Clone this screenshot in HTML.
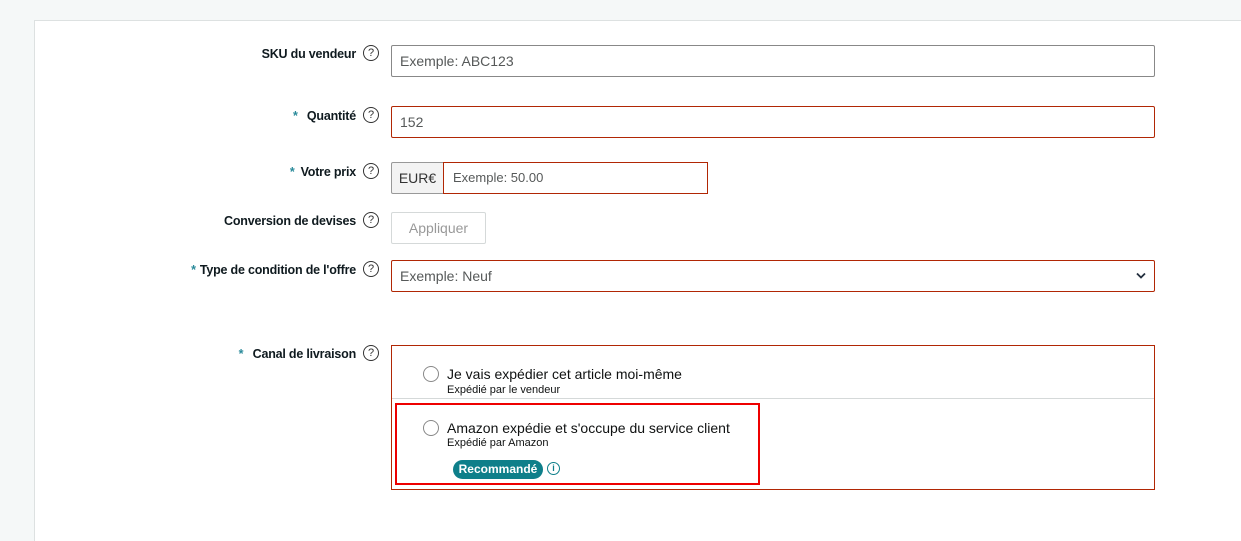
<!DOCTYPE html><html><head><style>
body{margin:0;width:1241px;height:530px;background:#f5f8f8;font-family:"Liberation Sans",sans-serif;position:relative;overflow:hidden}
.panel{position:absolute;left:34px;top:20px;width:1220px;height:520px;background:#fff;border-top:1px solid #dde1e1;border-left:1px solid #dde1e1}
.a{position:absolute}
.lbl{position:absolute;right:885px;font-size:12.5px;font-weight:bold;color:#0f1a1f;white-space:nowrap;letter-spacing:-0.2px}
.st{color:#2a8a9a;margin-right:6px}
.q{position:absolute;left:363px;width:14px;height:14px;border:1.3px solid #333;border-radius:50%;font-size:11px;text-align:center;line-height:14px;color:#333}
.in{position:absolute;left:391px;height:30px;border:1px solid #b12704;border-radius:2px;font-size:14px;color:#565959;line-height:30px;padding-left:8px;width:754px}
</style></head><body>
<div class="panel"></div>
<div class="lbl" style="top:47px">SKU du vendeur</div><div class="q" style="top:45px">?</div>
<div class="in" style="top:45px;border-color:#888">Exemple: ABC123</div>
<div class="lbl" style="top:109px"><span class="st">*</span> Quantité</div><div class="q" style="top:107px">?</div>
<div class="in" style="top:106px">152</div>
<div class="lbl" style="top:165px"><span class="st">*</span>Votre prix</div><div class="q" style="top:163px">?</div>
<div class="a" style="left:391px;top:162px;width:51px;height:30px;border:1px solid #999;border-radius:2px 0 0 2px;background:#f3f3f3;font-size:14px;line-height:30px;text-align:center;color:#333">EUR€</div>
<div class="a" style="left:443px;top:162px;width:254px;height:30px;border:1px solid #b12704;font-size:13px;line-height:30px;padding-left:9px;color:#565959">Exemple: 50.00</div>
<div class="lbl" style="top:214px">Conversion de devises</div><div class="q" style="top:212px">?</div>
<div class="a" style="left:391px;top:212px;width:93px;height:30px;border:1px solid #d5d9d9;border-radius:2px;font-size:14px;line-height:30px;text-align:center;color:#999">Appliquer</div>
<div class="lbl" style="top:263px"><span class="st" style="margin-right:4px">*</span>Type de condition de l'offre</div><div class="q" style="top:261px">?</div>
<div class="in" style="top:260px">Exemple: Neuf</div>
<svg class="a" style="left:1136px;top:272px" width="10" height="8"><path d="M1 1.5l4 4 4-4" stroke="#232f3e" stroke-width="1.8" fill="none"/></svg>
<div class="lbl" style="top:347px"><span class="st">*</span> Canal de livraison</div><div class="q" style="top:345px">?</div>
<div class="a" style="left:391px;top:345px;width:762px;height:143px;border:1px solid #b12704"></div>
<div class="a" style="left:392px;top:398px;width:762px;height:1px;background:#d5d9d9"></div>
<div class="a" style="left:423px;top:366px;width:14px;height:14px;border:1px solid #888;border-radius:50%"></div>
<div class="a" style="left:447px;top:366px;font-size:14px;color:#0f1111">Je vais expédier cet article moi-même</div>
<div class="a" style="left:447px;top:384px;font-size:11px;color:#0f1111">Expédié par le vendeur</div>
<div class="a" style="left:395px;top:403px;width:361px;height:78px;border:2px solid #e00"></div>
<div class="a" style="left:423px;top:420px;width:14px;height:14px;border:1px solid #888;border-radius:50%"></div>
<div class="a" style="left:447px;top:420px;font-size:14px;color:#0f1111">Amazon expédie et s'occupe du service client</div>
<div class="a" style="left:447px;top:437px;font-size:11px;color:#0f1111">Expédié par Amazon</div>
<div class="a" style="left:453px;top:460px;width:90px;height:19px;border-radius:10px;background:#0e7f8a;color:#fff;font-size:12px;font-weight:bold;line-height:19px;text-align:center">Recommandé</div>
<div class="a" style="left:547px;top:462px;width:11px;height:11px;border:1.5px solid #0e7f8a;border-radius:50%;color:#0e7f8a;font-size:9px;font-weight:bold;text-align:center;line-height:11px">i</div>
</body></html>
